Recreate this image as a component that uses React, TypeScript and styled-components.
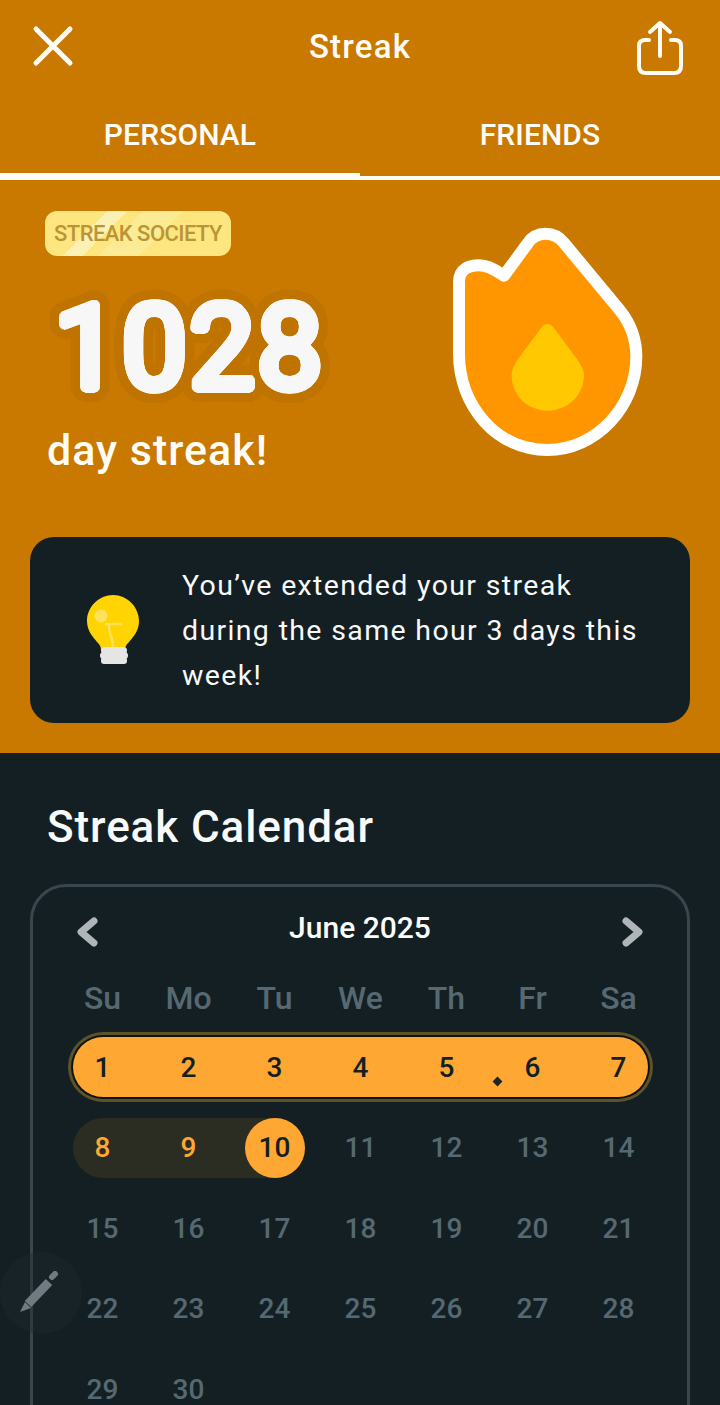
import React from 'react';
import styled, { createGlobalStyle } from 'styled-components';

const GlobalStyle = createGlobalStyle`
  html, body {
    margin: 0;
    padding: 0;
    background: #141f23;
  }
  body {
    font-family: Roboto, "Noto Sans", sans-serif;
  }
`;

// ring of hard shadows, gives the big number its rounded corners and halo
const ring = (radius: number, color: string) =>
  Array.from({ length: 24 }, (_, i) => {
    const a = (i / 24) * Math.PI * 2;
    const x = (Math.cos(a) * radius).toFixed(1);
    const y = (Math.sin(a) * radius).toFixed(1);
    return `${x}px ${y}px 0 ${color}`;
  }).join(', ');

const Page = styled.div`
  position: relative;
  width: 720px;
  height: 1405px;
  overflow: hidden;
  background: #141f23;
`;

const Top = styled.section`
  height: 753px;
  background: #c97800;
  color: #fffdf6;
  box-sizing: border-box;
`;

const Header = styled.header`
  height: 92px;
  display: flex;
  align-items: center;
  justify-content: space-between;
  padding: 0 37px 0 32px;
`;

const Title = styled.h1`
  margin: 0 0 0 9px;
  font-size: 33px;
  font-weight: 500;
  letter-spacing: 1.2px;
`;

const ShareIcon = styled.svg`
  width: 46px;
  height: 56px;
  margin-top: 4px;
`;

const Tabs = styled.nav`
  display: grid;
  grid-template-columns: 1fr 1fr;
  height: 88px;
`;

const Tab = styled.div<{ $active?: boolean }>`
  display: flex;
  justify-content: center;
  align-items: center;
  padding-top: ${(p) => (p.$active ? '4px' : '0')};
  box-sizing: border-box;
  font-size: 30px;
  font-weight: 500;
  letter-spacing: 0.1px;
  border-bottom: ${(p) => (p.$active ? '7px' : '4px')} solid #fffdf6;
`;

const Hero = styled.div`
  display: flex;
  justify-content: space-between;
  height: 357px;
  box-sizing: border-box;
  padding: 31px 76px 0 45px;
`;

const HeroLeft = styled.div`
  display: flex;
  flex-direction: column;
  align-items: flex-start;
`;

const Badge = styled.div`
  height: 45px;
  width: 186px;
  box-sizing: border-box;
  display: flex;
  align-items: center;
  justify-content: center;
  border-radius: 12px;
  font-size: 22px;
  font-weight: 500;
  letter-spacing: -0.55px;
  white-space: nowrap;
  color: #bb9436;
  background: linear-gradient(
    135deg,
    #fde67f 0 44px,
    #fcf1b4 44px 58px,
    #fde67f 58px 70px,
    #fbeb94 70px 98px,
    #fde67f 98px 100%
  );
`;

const Count = styled.div`
  margin: 30px 0 0 9px;
  font-size: 116px;
  line-height: 124px;
  font-weight: 400;
  letter-spacing: 2.5px;
  color: #f7f7f7;
  text-shadow: ${ring(4.5, '#f7f7f7')}, ${ring(10, '#c07400')}, ${ring(14, '#c07400')};
`;

const DayStreak = styled.div`
  margin: 15px 0 0 2px;
  font-size: 43px;
  line-height: 50px;
  font-weight: 500;
  letter-spacing: 1px;
`;

const FlameBox = styled.svg`
  width: 230px;
  height: 260px;
  margin-top: -1px;
  margin-right: -15px;
`;

const TipCard = styled.div`
  margin: 0 30px;
  height: 186px;
  display: flex;
  align-items: center;
  border-radius: 24px;
  background: #141f23;
`;

const TipIcon = styled.svg`
  width: 60px;
  height: 76px;
  margin: 0 40px 0 52px;
  flex: none;
`;

const TipText = styled.p`
  margin: 0;
  width: 470px;
  font-size: 28.5px;
  line-height: 45px;
  font-weight: 400;
  letter-spacing: 1.35px;
  color: #f8f9f9;
`;

const Bottom = styled.section`
  padding: 0 30px;
`;

const SectionTitle = styled.h2`
  margin: 0;
  padding: 45px 0 0 17px;
  font-size: 44px;
  line-height: 58px;
  font-weight: 500;
  letter-spacing: 0.9px;
  color: #f8f9f9;
`;

const Calendar = styled.div`
  margin-top: 28px;
  height: 620px;
  box-sizing: border-box;
  border: 3px solid #37464f;
  border-radius: 36px;
  display: flex;
  flex-direction: column;
  align-items: center;
`;

const MonthBar = styled.div`
  width: 600px;
  height: 81px;
  padding-bottom: 1px;
  box-sizing: border-box;
  display: flex;
  align-items: center;
  justify-content: space-between;
  color: #fbfbfb;
  font-size: 30px;
  font-weight: 500;
`;

const Chevron = styled.svg`
  width: 60px;
  height: 40px;
  margin-top: 10px;
`;

const WeekGrid = styled.div`
  display: grid;
  grid-template-columns: repeat(7, 86px);
  height: 60px;
  margin-left: 1px;
  align-items: center;
  justify-items: center;
`;

const DayName = styled.div`
  font-size: 32px;
  font-weight: 500;
  color: #566972;
`;

const DayRow = styled.div`
  display: grid;
  grid-template-columns: repeat(7, 86px);
  grid-template-rows: 60px;
  height: 60px;
  margin: 20.5px 0 0 1px;
  align-items: center;
  justify-items: center;
`;

const FirstRow = styled(DayRow)`
  margin-top: 9px;
`;

const Band = styled.div<{ $end: number; $done?: boolean }>`
  grid-row: 1;
  grid-column: 1 / ${(p) => p.$end};
  justify-self: stretch;
  height: 60px;
  margin: 0 ${(p) => (p.$done ? '14px' : '13px')} 0 13px;
  border-radius: 30px;
  background: ${(p) => (p.$done ? '#ffa733' : '#2b2c22')};
  box-shadow: ${(p) =>
    p.$done ? '0 0 0 2px #101316, 0 0 0 5px #5c5328' : 'none'};
`;

const Day = styled.div<{ $col: number; $tone: 'done' | 'partial' | 'today' | 'idle' }>`
  grid-row: 1;
  grid-column: ${(p) => p.$col};
  width: 60px;
  height: 60px;
  display: flex;
  align-items: center;
  justify-content: center;
  border-radius: 50%;
  font-size: 28px;
  font-weight: 500;
  z-index: 1;
  color: ${(p) =>
    p.$tone === 'partial'
      ? '#ffa733'
      : p.$tone === 'idle'
        ? '#566972'
        : '#141f23'};
  background: ${(p) => (p.$tone === 'today' ? '#ffa733' : 'transparent')};
`;

const Speck = styled.span`
  position: absolute;
  left: 494px;
  top: 1078px;
  width: 7px;
  height: 7px;
  background: #1f2426;
  transform: rotate(45deg);
`;

const PencilButton = styled.div`
  position: absolute;
  left: 0;
  top: 1252px;
  width: 82px;
  height: 82px;
  border-radius: 50%;
  background: rgba(28, 42, 44, 0.38);
  display: flex;
  align-items: center;
  justify-content: center;
`;

const weeks: { day: number; col: number }[][] = [
  [11, 12, 13, 14].map((day, i) => ({ day, col: i + 4 })),
  [15, 16, 17, 18, 19, 20, 21].map((day, i) => ({ day, col: i + 1 })),
  [22, 23, 24, 25, 26, 27, 28].map((day, i) => ({ day, col: i + 1 })),
  [29, 30].map((day, i) => ({ day, col: i + 1 })),
];

const dayNames = ['Su', 'Mo', 'Tu', 'We', 'Th', 'Fr', 'Sa'];

const Flame = () => (
  <FlameBox viewBox="0 0 690 780">
    <path
      d="M225 197 L296 100 C322 62 376 62 406 100 L572 300 C606 342 622 388 622 440 C622 590 500 720 355 720 C205 720 90 590 90 430 L90 215 C90 178 118 166 150 166 C172 166 186 172 225 197 Z"
      fill="#ff9600"
      stroke="#fff"
      strokeWidth="36"
      strokeLinejoin="round"
    />
    <path
      d="M338 352 C347 339 364 339 373 352 L440 442 C456 464 465 480 465 496 C465 556 416 602 356 602 C296 602 248 556 248 496 C248 480 256 462 272 440 Z"
      fill="#ffc800"
    />
  </FlameBox>
);

const Bulb = () => (
  <TipIcon viewBox="0 0 60 76">
    <path
      d="M31 3 C45 3 57 15 57 29 C57 39 51 45 47 50 C44 53 43 55 43 58 L19 58 C19 55 18 53 15 50 C11 45 5 39 5 29 C5 15 17 3 31 3 Z"
      fill="#ffd400"
    />
    <circle cx="19" cy="24" r="6.5" fill="#ffe25c" />
    <path
      d="M24 32 H39 M27 32 C26 40 31 45 31 56"
      fill="none"
      stroke="#ffe25c"
      strokeWidth="2.5"
      strokeLinecap="round"
    />
    <rect x="19" y="55" width="26" height="7" rx="3.5" fill="#e5e5e5" />
    <rect x="18" y="60" width="28" height="7" rx="3.5" fill="#e5e5e5" />
    <rect x="19" y="65" width="26" height="7" rx="3" fill="#e5e5e5" />
  </TipIcon>
);

export default function App() {
  return (
    <Page>
      <GlobalStyle />
      <Top>
        <Header>
          <svg width="42" height="42" viewBox="0 0 42 42">
            <path
              d="M4 4 L38 38 M38 4 L4 38"
              stroke="#fffdf6"
              strokeWidth="5"
              strokeLinecap="round"
            />
          </svg>
          <Title>Streak</Title>
          <ShareIcon viewBox="0 0 46 56" fill="none">
            <path
              d="M12 20 H8 C4 20 2 22 2 26 V46 C2 51 5 53 9 53 H37 C41 53 44 51 44 46 V26 C44 22 42 20 38 20 H34"
              stroke="#fffdf6"
              strokeWidth="4"
              strokeLinecap="round"
            />
            <path
              d="M23 36 V3 M13 12 L23 3 L33 12"
              stroke="#fffdf6"
              strokeWidth="4"
              strokeLinecap="round"
              strokeLinejoin="round"
            />
          </ShareIcon>
        </Header>
        <Tabs>
          <Tab $active>PERSONAL</Tab>
          <Tab>FRIENDS</Tab>
        </Tabs>
        <Hero>
          <HeroLeft>
            <Badge>STREAK SOCIETY</Badge>
            <Count>1028</Count>
            <DayStreak>day streak!</DayStreak>
          </HeroLeft>
          <Flame />
        </Hero>
        <TipCard>
          <Bulb />
          <TipText>You’ve extended your streak during the same hour 3 days this week!</TipText>
        </TipCard>
      </Top>
      <Bottom>
        <SectionTitle>Streak Calendar</SectionTitle>
        <Calendar>
          <MonthBar>
            <Chevron viewBox="0 0 60 40" fill="none">
              <path
                d="M34 9 L21 20 L34 31"
                stroke="#afb6ba"
                strokeWidth="7"
                strokeLinecap="round"
                strokeLinejoin="round"
              />
            </Chevron>
            June 2025
            <Chevron viewBox="0 0 60 40" fill="none">
              <path
                d="M26 9 L39 20 L26 31"
                stroke="#afb6ba"
                strokeWidth="7"
                strokeLinecap="round"
                strokeLinejoin="round"
              />
            </Chevron>
          </MonthBar>
          <WeekGrid>
            {dayNames.map((name) => (
              <DayName key={name}>{name}</DayName>
            ))}
          </WeekGrid>
          <FirstRow>
            <Band $end={8} $done />
            {[1, 2, 3, 4, 5, 6, 7].map((day) => (
              <Day key={day} $col={day} $tone="done">
                {day}
              </Day>
            ))}
          </FirstRow>
          <DayRow>
            <Band $end={4} />
            <Day $col={1} $tone="partial">8</Day>
            <Day $col={2} $tone="partial">9</Day>
            <Day $col={3} $tone="today">10</Day>
            {weeks[0].map(({ day, col }) => (
              <Day key={day} $col={col} $tone="idle">
                {day}
              </Day>
            ))}
          </DayRow>
          {weeks.slice(1).map((week) => (
            <DayRow key={week[0].day}>
              {week.map(({ day, col }) => (
                <Day key={day} $col={col} $tone="idle">
                  {day}
                </Day>
              ))}
            </DayRow>
          ))}
        </Calendar>
      </Bottom>
      <Speck />
      <PencilButton>
        <svg width="44" height="44" viewBox="0 0 44 44" fill="none">
          <path d="M9 33 L30 11" stroke="#6f7b80" strokeWidth="9" />
          <path d="M6 31 L12 37 L1 41 Z" fill="#6f7b80" />
          <path d="M33 6 L36 3" stroke="#6f7b80" strokeWidth="6" strokeLinecap="round" />
        </svg>
      </PencilButton>
    </Page>
  );
}
